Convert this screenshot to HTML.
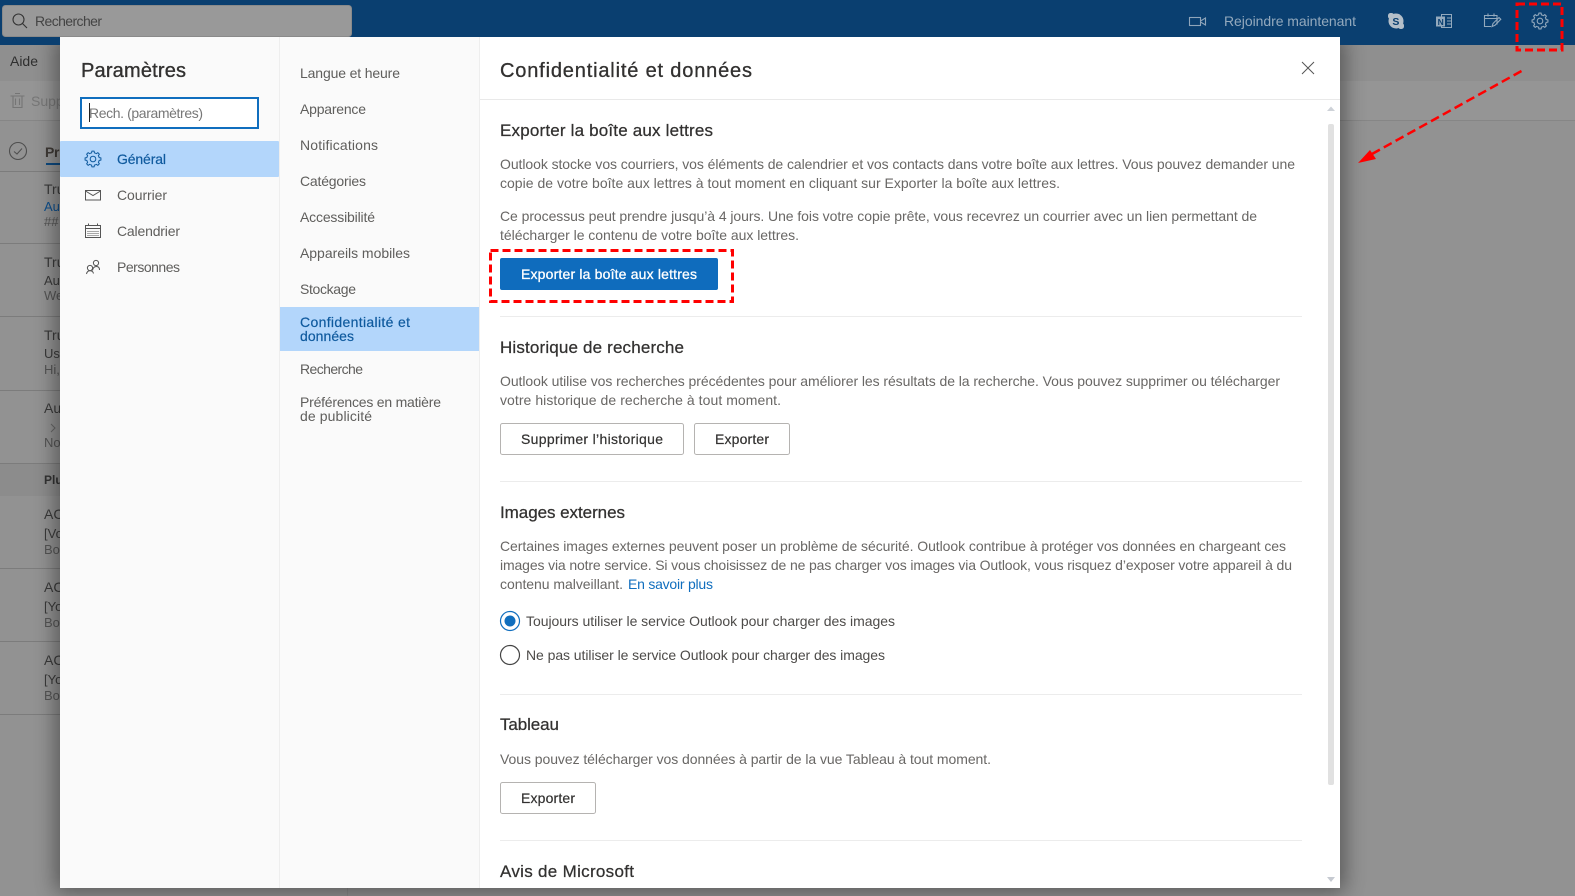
<!DOCTYPE html>
<html lang="fr"><head><meta charset="utf-8"><title>Paramètres</title>
<style>
html,body{margin:0;padding:0;width:1575px;height:896px;overflow:hidden;background:#949494}
svg{display:block;position:absolute;left:0;top:0}
text{font-family:"Liberation Sans",Arial,sans-serif;font-size:14px;white-space:pre}
.b{fill:#696765}.d{fill:#4a4846}.h{font-size:17px;fill:#323130;stroke:#323130;stroke-width:.25}
.n{fill:#5f5e5c;font-size:14px}.s{fill:#0f5a9e;font-size:14px}
.l{fill:#3a3a3a;font-size:14px}.l2{fill:#3a3a3a;font-size:13px}.g{fill:#555;font-size:13px}
.ico{fill:none;stroke:#555;stroke-width:1}
</style></head><body>
<svg width="1575" height="896" viewBox="0 0 1575 896" xmlns="http://www.w3.org/2000/svg">
<defs>
<filter id="sh" x="-10%" y="-10%" width="120%" height="120%"><feGaussianBlur stdDeviation="11"/></filter>
<polyline id="t" points="-2.41,-5.82 -1.42,-6.14 -1.11,-7.92 1.11,-7.92 1.42,-6.14 2.41,-5.82" fill="none" stroke-linejoin="round"/>
<g id="cog"><use href="#t"/><use href="#t" transform="rotate(45)"/><use href="#t" transform="rotate(90)"/><use href="#t" transform="rotate(135)"/><use href="#t" transform="rotate(180)"/><use href="#t" transform="rotate(225)"/><use href="#t" transform="rotate(270)"/><use href="#t" transform="rotate(315)"/><circle r="2.8" fill="none"/></g>
</defs>

<!-- background app -->
<rect x="0" y="45" width="1575" height="36" fill="#8f8f8f"/>
<rect x="0" y="81" width="1575" height="40" fill="#959595"/>
<rect x="0" y="121" width="1575" height="775" fill="#929292"/>
<rect x="0" y="120" width="1575" height="1" fill="#868686"/>
<rect x="0" y="463" width="347" height="33" fill="#8c8c8c"/>
<rect x="347" y="121" width="1" height="775" fill="#898989"/>
<g fill="#7c7c7c"><rect y="171" width="347" height="1"/><rect y="243" width="347" height="1"/><rect y="316" width="347" height="1"/><rect y="390" width="347" height="1"/><rect y="463" width="347" height="1"/><rect y="568" width="347" height="1"/><rect y="641" width="347" height="1"/><rect y="714" width="347" height="1"/></g>
<text x="10" y="66" fill="#2f2f2f" textLength="28">Aide</text>
<g fill="none" stroke="#757575" stroke-width="1.1"><path d="M10.5 96H24.5M13 96V107.5H22V96M15 93.5H20M15.5 98.5V105M19.5 98.5V105"/></g>
<text x="31" y="106" fill="#777">Supp</text>
<circle cx="18" cy="151" r="8.5" fill="none" stroke="#4e4e4e" stroke-width="1.1"/><path d="M14 151.5L17 154L22 148.5" fill="none" stroke="#4e4e4e"/>
<text x="45" y="157" fill="#3f3a36" style="font-weight:bold" textLength="18">Pri</text>
<rect x="46" y="163" width="16" height="2" fill="#0e4a80"/>
<g>
<text x="44" y="194" class="l">Tru</text><text x="44" y="211" fill="#0e4f8c" style="font-size:13px">Au</text><text x="44" y="226" class="g">##</text>
<text x="44" y="267" class="l">Tru</text><text x="44" y="285" class="l2">Au</text><text x="44" y="300" class="g">We</text>
<text x="44" y="340" class="l">Tru</text><text x="44" y="358" class="l2">Use</text><text x="44" y="374" class="g">Hi,</text>
<text x="44" y="413" class="l">Au</text><path d="M51 424L55 428L51 432" fill="none" stroke="#666"/><text x="44" y="447" class="g">No</text>
<text x="44" y="484" fill="#333" style="font-size:12px;font-weight:bold">Plu</text>
<text x="44" y="519" class="l">AC</text><text x="44" y="538" class="l2">[Vo</text><text x="44" y="554" class="g">Bon</text>
<text x="44" y="592" class="l">AC</text><text x="44" y="611" class="l2">[Yo</text><text x="44" y="627" class="g">Bon</text>
<text x="44" y="665" class="l">AC</text><text x="44" y="684" class="l2">[Yo</text><text x="44" y="700" class="g">Bon</text>
</g>

<!-- modal shadow -->
<rect x="56" y="37" width="1288" height="855" fill="#000" opacity=".42" filter="url(#sh)"/>

<!-- top bar -->
<rect x="0" y="0" width="1575" height="45" fill="#0a3f70"/>
<rect x="2.5" y="5.5" width="349" height="31" rx="3" fill="#999" stroke="#8a8a8a"/>
<circle cx="18.5" cy="19.5" r="5.5" fill="none" stroke="#333" stroke-width="1.1"/><path d="M22.5 23.5L27 28" stroke="#333" stroke-width="1.1"/>
<text x="35" y="26" fill="#444" textLength="67">Rechercher</text>
<g fill="none" stroke="#8fa5ba" stroke-width="1.1"><rect x="1189.5" y="17.5" width="11" height="8"/><path d="M1200.5 21L1205.5 18V25L1200.5 22"/></g>
<text x="1224" y="26" fill="#93a9bd" textLength="132">Rejoindre maintenant</text>
<circle cx="1396" cy="21" r="7.5" fill="#b4bfc9"/><rect x="1388" y="13" width="6" height="6" rx="2.5" fill="#b4bfc9"/><rect x="1398" y="23" width="6" height="6" rx="2.5" fill="#b4bfc9"/>
<text x="1392.4" y="25" fill="#0a3f70" style="font-size:10.5px;font-weight:bold">S</text>
<g fill="none" stroke="#93a9bd" stroke-width="1"><rect x="1441.5" y="14.5" width="10" height="13"/><path d="M1447 18h4M1447 21h4M1447 24h4"/></g>
<rect x="1436" y="16.5" width="9" height="10" fill="#93a9bd"/><text x="1437.6" y="25" fill="#0a3f70" style="font-size:8.5px;font-weight:bold">N</text>
<g fill="none" stroke="#93a9bd" stroke-width="1.1"><path d="M1497 24.5V15.5H1484.5V26.5H1491M1484.5 18.5H1497M1488 13.5V16.5M1494 13.5V16.5"/><path d="M1492 26.5L1493 23.5L1499 17.5L1500.8 19.3L1495 25.3Z"/></g>
<use href="#cog" transform="translate(1540 21)" stroke="#93a9bd" stroke-width="1.1"/>

<!-- modal -->
<rect x="60" y="37" width="1280" height="851" fill="#fff"/>
<rect x="60" y="37" width="219" height="851" fill="#fafafa"/>
<rect x="279" y="37" width="1" height="851" fill="#eeeeee"/>
<rect x="280" y="37" width="199" height="851" fill="#fafafa"/>
<rect x="479" y="37" width="1" height="851" fill="#eeeeee"/>
<rect x="480" y="99" width="860" height="1" fill="#e9e9e9"/>

<!-- left nav -->
<text x="81" y="77" style="font-size:20px" fill="#323130" stroke="#323130" stroke-width=".35" textLength="105">Paramètres</text>
<rect x="81" y="98" width="177" height="30" fill="#fff" stroke="#106ebe" stroke-width="2"/>
<rect x="89" y="103" width="1" height="19" fill="#222"/>
<text x="89" y="118" fill="#777" textLength="114">Rech. (paramètres)</text>
<rect x="60" y="141" width="219" height="36" rx="1" fill="#b3d6fb"/>
<use href="#cog" transform="translate(93 159)" stroke="#0f5a9e" stroke-width="1"/>
<text x="117" y="164" class="s" stroke="#0f5a9e" stroke-width=".2" textLength="49">Général</text>
<g class="ico"><rect x="85.5" y="190.5" width="15" height="9.5"/><path d="M85.5 191L93 195.5L100.5 191"/></g>
<text x="117" y="200" class="n" textLength="50">Courrier</text>
<g class="ico"><rect x="85.5" y="225.5" width="15" height="12"/><path d="M85.5 228.5H100.5M88.5 223.5V226M97.5 223.5V226"/><path d="M87.5 231.5h11M87.5 233.5h11M87.5 235.5h11" stroke-dasharray="1 1"/></g>
<text x="117" y="236" class="n" textLength="63">Calendrier</text>
<g class="ico"><circle cx="96" cy="263" r="2.6"/><path d="M92.5 270.5C93 267 95 266.5 96.5 266.5C98.5 266.5 99.5 268 99.5 270"/><circle cx="90" cy="268" r="2.6"/><path d="M86.5 274C87 271.5 88.5 270.8 90 270.8C91.5 270.8 93 271.5 93.5 273.5"/></g>
<text x="117" y="272" class="n" textLength="63">Personnes</text>

<!-- middle nav -->
<text x="300" y="78" class="n" textLength="100">Langue et heure</text>
<text x="300" y="114" class="n" textLength="66">Apparence</text>
<text x="300" y="150" class="n" textLength="78">Notifications</text>
<text x="300" y="186" class="n" textLength="66">Catégories</text>
<text x="300" y="222" class="n" textLength="75">Accessibilité</text>
<text x="300" y="258" class="n" textLength="110">Appareils mobiles</text>
<text x="300" y="294" class="n" textLength="56">Stockage</text>
<rect x="280" y="307" width="199" height="44" fill="#b3d6fb"/>
<text x="300" y="327" class="s" stroke="#0f5a9e" stroke-width=".2" textLength="110">Confidentialité et</text>
<text x="300" y="341" class="s" stroke="#0f5a9e" stroke-width=".2" textLength="54">données</text>
<text x="300" y="374" class="n" textLength="63">Recherche</text>
<text x="300" y="407" class="n" textLength="141">Préférences en matière</text>
<text x="300" y="421" class="n" textLength="72">de publicité</text>

<!-- content -->
<text x="500" y="77" style="font-size:20px" fill="#323130" stroke="#323130" stroke-width=".3" textLength="252">Confidentialité et données</text>
<path d="M1302 62L1314 74M1314 62L1302 74" stroke="#555" stroke-width="1" fill="none"/>

<text x="500" y="136" class="h" textLength="213">Exporter la boîte aux lettres</text>
<text x="500" y="169" class="b" textLength="795">Outlook stocke vos courriers, vos éléments de calendrier et vos contacts dans votre boîte aux lettres. Vous pouvez demander une</text>
<text x="500" y="188" class="b" textLength="560">copie de votre boîte aux lettres à tout moment en cliquant sur Exporter la boîte aux lettres.</text>
<text x="500" y="221" class="b" textLength="757">Ce processus peut prendre jusqu’à 4 jours. Une fois votre copie prête, vous recevrez un courrier avec un lien permettant de</text>
<text x="500" y="240" class="b" textLength="299">télécharger le contenu de votre boîte aux lettres.</text>
<rect x="500" y="258" width="218" height="32" rx="2" fill="#0f6cbd"/>
<text x="521" y="279" fill="#fff" stroke="#fff" stroke-width=".3" textLength="176">Exporter la boîte aux lettres</text>
<rect x="490.5" y="250.5" width="242" height="51" fill="none" stroke="#f00" stroke-width="3" stroke-dasharray="8 4"/>
<rect x="500" y="316" width="802" height="1" fill="#ececec"/>

<text x="500" y="353" class="h" textLength="184">Historique de recherche</text>
<text x="500" y="386" class="b" textLength="780">Outlook utilise vos recherches précédentes pour améliorer les résultats de la recherche. Vous pouvez supprimer ou télécharger</text>
<text x="500" y="405" class="b" textLength="281">votre historique de recherche à tout moment.</text>
<rect x="500.5" y="423.5" width="183" height="31" rx="2" fill="#fff" stroke="#b5b3b1"/>
<text x="521" y="444" fill="#323130" stroke="#323130" stroke-width=".2" textLength="142">Supprimer l’historique</text>
<rect x="694.5" y="423.5" width="95" height="31" rx="2" fill="#fff" stroke="#b5b3b1"/>
<text x="715" y="444" fill="#323130" stroke="#323130" stroke-width=".2" textLength="54">Exporter</text>
<rect x="500" y="481" width="802" height="1" fill="#ececec"/>

<text x="500" y="518" class="h" textLength="125">Images externes</text>
<text x="500" y="551" class="b" textLength="786">Certaines images externes peuvent poser un problème de sécurité. Outlook contribue à protéger vos données en chargeant ces</text>
<text x="500" y="570" class="b" textLength="792">images via notre service. Si vous choisissez de ne pas charger vos images via Outlook, vous risquez d’exposer votre appareil à du</text>
<text x="500" y="589" class="b" textLength="123">contenu malveillant.</text>
<text x="628" y="589" fill="#106ebe" textLength="85">En savoir plus</text>

<circle cx="510" cy="621" r="9.5" fill="#fff" stroke="#106ebe" stroke-width="1.2"/><circle cx="510" cy="621" r="5.5" fill="#106ebe"/>
<text x="526" y="626" fill="#4d4b49" textLength="369">Toujours utiliser le service Outlook pour charger des images</text>
<circle cx="510" cy="655" r="9.5" fill="#fff" stroke="#444" stroke-width="1.2"/>
<text x="526" y="660" fill="#4d4b49" textLength="359">Ne pas utiliser le service Outlook pour charger des images</text>
<rect x="500" y="694" width="802" height="1" fill="#ececec"/>

<text x="500" y="730" class="h" textLength="59">Tableau</text>
<text x="500" y="764" class="b" textLength="491">Vous pouvez télécharger vos données à partir de la vue Tableau à tout moment.</text>
<rect x="500.5" y="782.5" width="95" height="31" rx="2" fill="#fff" stroke="#b5b3b1"/>
<text x="521" y="803" fill="#323130" stroke="#323130" stroke-width=".2" textLength="54">Exporter</text>
<rect x="500" y="840" width="802" height="1" fill="#ececec"/>
<text x="500" y="877" class="h" textLength="134">Avis de Microsoft</text>

<!-- scrollbar -->
<rect x="1328" y="124" width="6" height="661" rx="2" fill="#e1e1e1"/>
<path d="M1331 106.5L1335 111H1327Z" fill="#ced2d8"/>
<path d="M1331 882L1335 877H1327Z" fill="#c6cad1"/>

<!-- red annotations -->
<rect x="1517" y="4" width="45" height="46" fill="none" stroke="#f00" stroke-width="3" stroke-dasharray="8 4"/>
<path d="M1521.5 71L1372 154" fill="none" stroke="#f00" stroke-width="2.5" stroke-dasharray="9 4.5"/>
<path d="M1358 163L1370 150L1376 159Z" fill="#f00"/>
</svg>
</body></html>
